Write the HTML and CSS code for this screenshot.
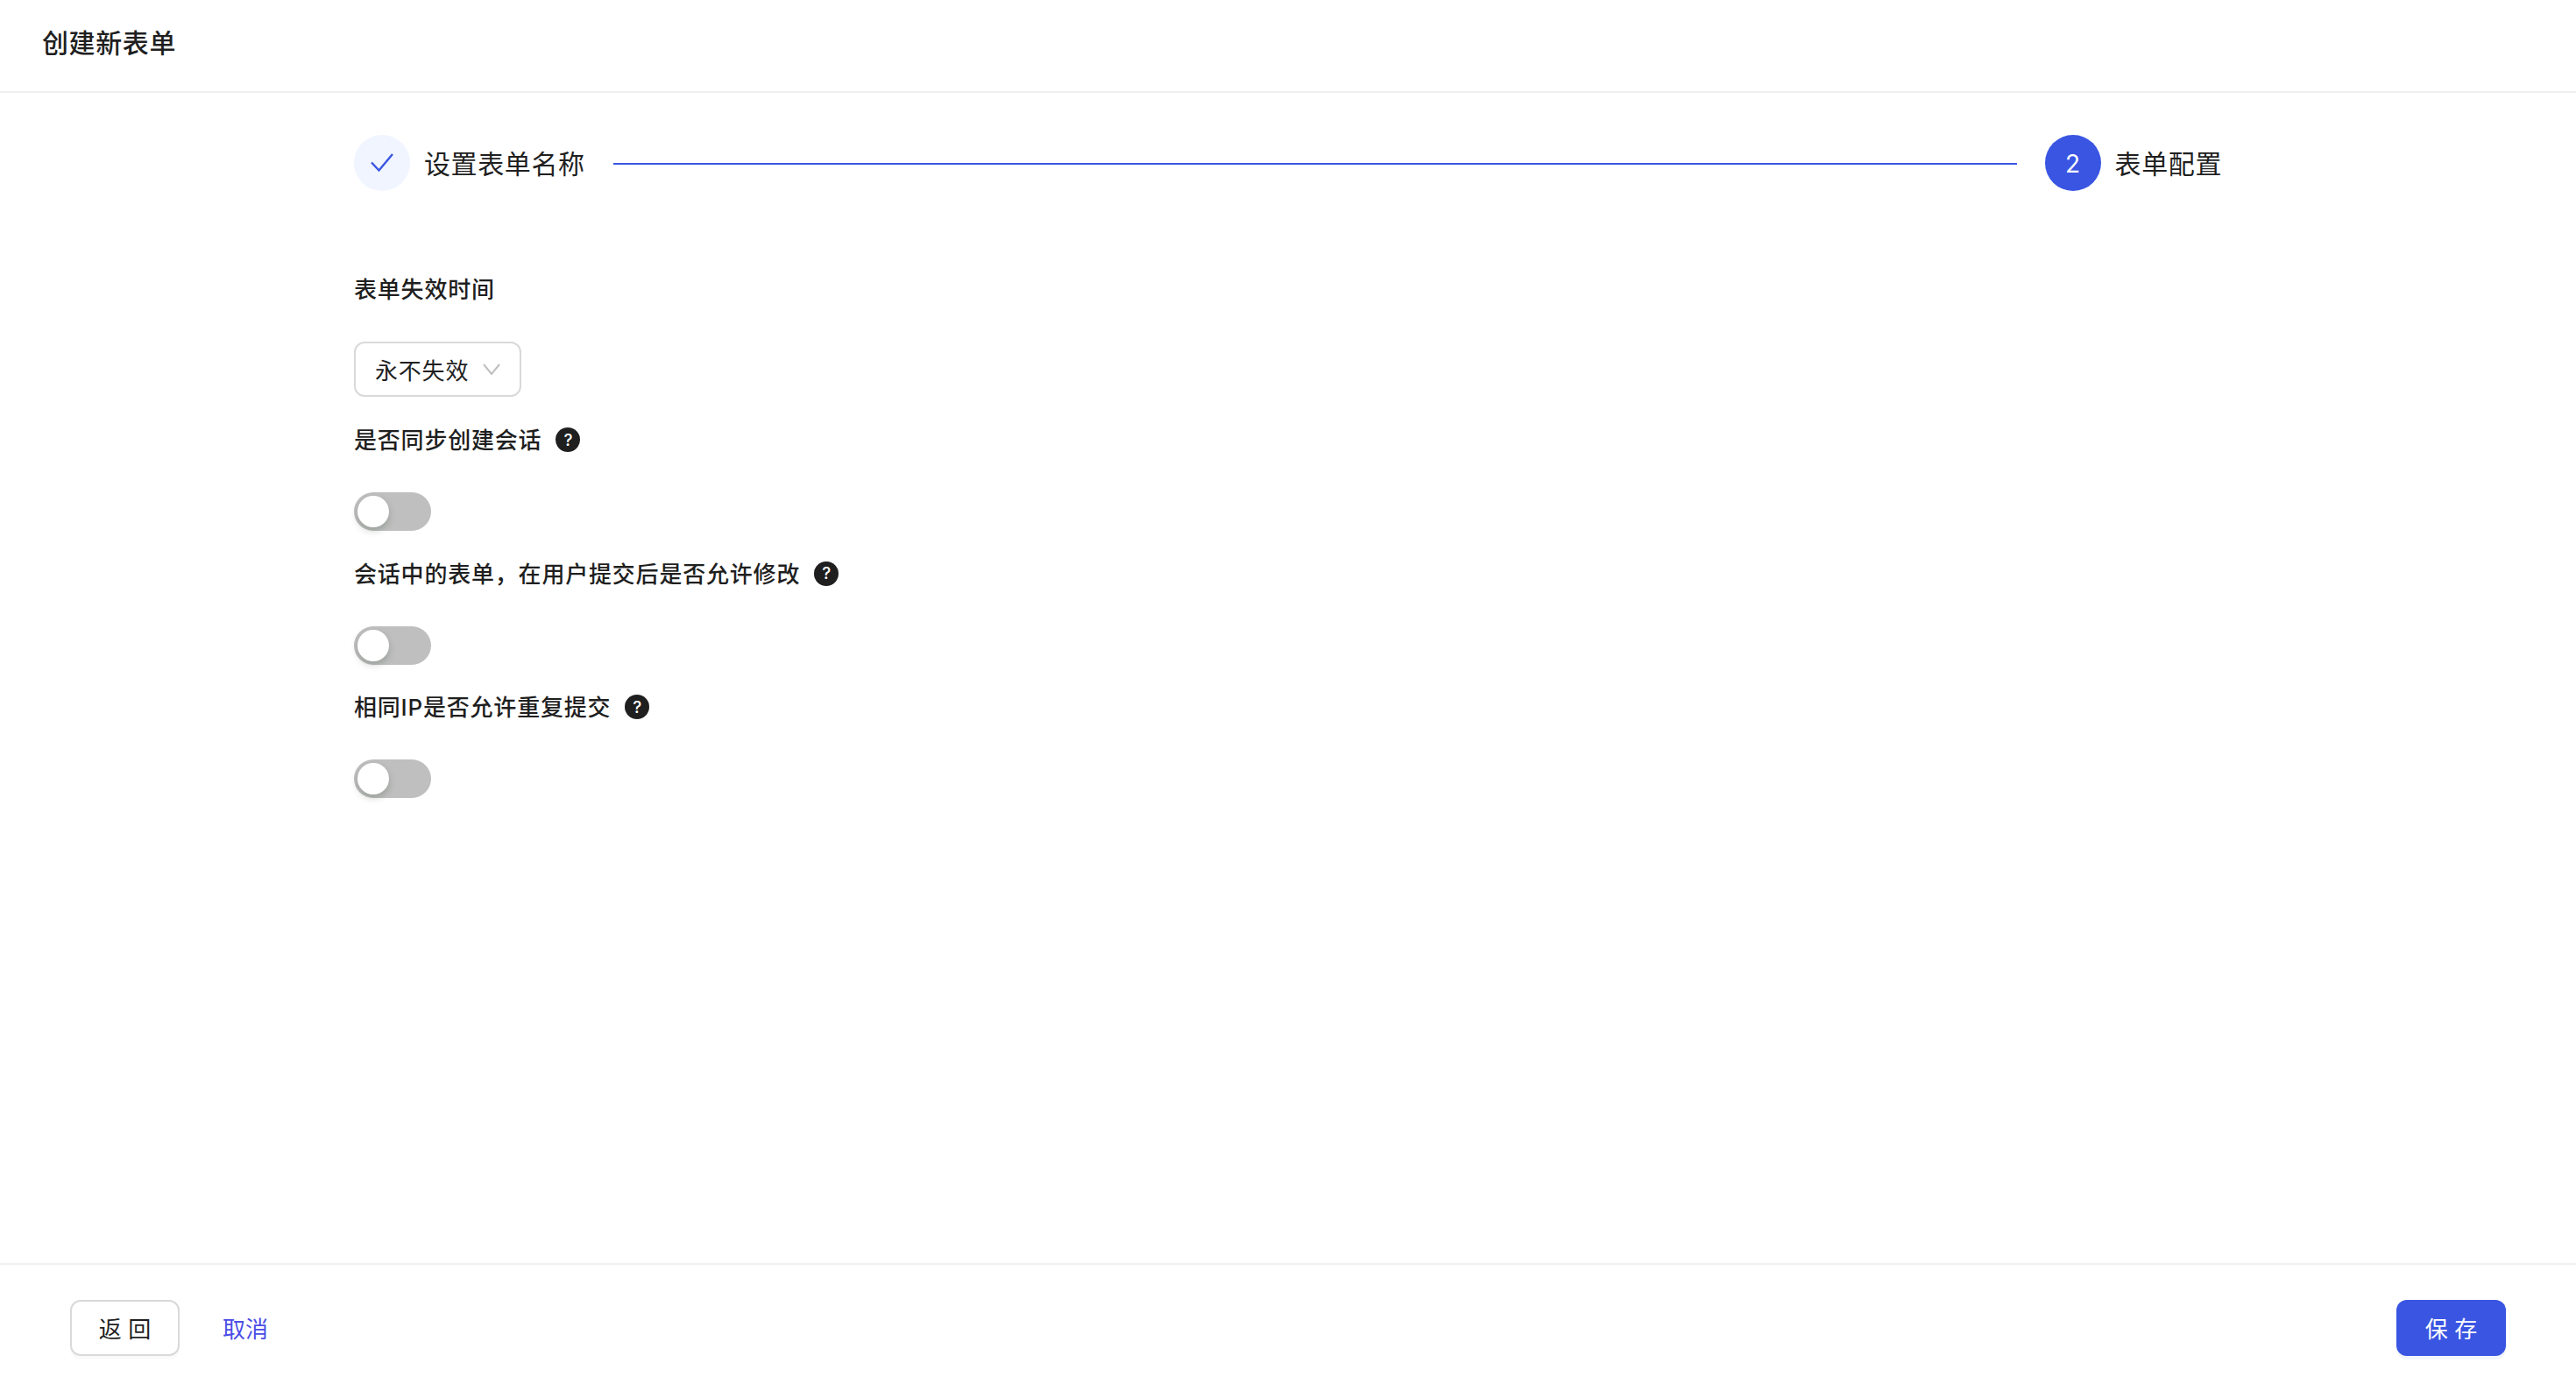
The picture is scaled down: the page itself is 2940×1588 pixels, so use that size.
FILE: index.html
```html
<!DOCTYPE html>
<html lang="zh-CN">
<head>
  <meta charset="UTF-8" />
  <title>创建新表单</title>
  <link rel="stylesheet" href="styles.css">
</head>
<body>
  <div class="page">
    <header class="page-header">创建新表单</header>

    <main class="content">
      <div class="steps">
        <div class="step">
          <span class="step-icon step-done">
            <svg width="28" height="24" viewBox="0 0 28 24"><path d="M2 11.5 L10.5 20.5 L26 2" fill="none" stroke="#3955e2" stroke-width="2.4"/></svg>
          </span>
          <span class="step-title">设置表单名称</span>
        </div>
        <div class="step-line"></div>
        <div class="step">
          <span class="step-icon step-active">2</span>
          <span class="step-title">表单配置</span>
        </div>
      </div>

      <div class="form-item form-item-select">
        <div class="form-label">表单失效时间</div>
        <div class="select">
          <span>永不失效</span>
          <svg width="20" height="13" viewBox="0 0 20 13"><path d="M1 1 L10 12 L19 1" fill="none" stroke="#bfbfbf" stroke-width="2"/></svg>
        </div>
      </div>

      <div class="form-item">
        <div class="form-label">是否同步创建会话<span class="help">?</span></div>
        <div class="switch"><span class="switch-knob"></span></div>
      </div>

      <div class="form-item">
        <div class="form-label">会话中的表单，在用户提交后是否允许修改<span class="help">?</span></div>
        <div class="switch"><span class="switch-knob"></span></div>
      </div>

      <div class="form-item">
        <div class="form-label">相同IP是否允许重复提交<span class="help">?</span></div>
        <div class="switch"><span class="switch-knob"></span></div>
      </div>
    </main>

    <footer class="page-footer">
      <div class="footer-left">
        <button class="btn btn-default">返 回</button>
        <a class="link-cancel">取消</a>
      </div>
      <button class="btn btn-primary">保 存</button>
    </footer>
  </div>
</body>
</html>
```

FILE: styles.css
```css
* {
  box-sizing: border-box;
}
body {
  margin: 0;
  background-color: #fff;
  color: #1f1f1f;
  font-family: Inter, 'Noto Sans CJK SC', sans-serif;
}
.page {
  display: flex;
  flex-direction: column;
  height: 100vh;
}
.page-header {
  height: 106px;
  padding-left: 48px;
  border-bottom: 2px solid #f0f0f0;
  font-size: 30px;
  font-weight: 500;
  letter-spacing: 0.6px;
  line-height: 98px;
}
.content {
  flex: 1;
  width: 2132px;
  margin: 0 auto;
  padding-top: 48px;
}
.steps {
  display: flex;
  align-items: center;
  margin-bottom: 92px;
}
.step {
  display: flex;
  align-items: center;
  gap: 16px;
}
.step-icon {
  display: flex;
  align-items: center;
  justify-content: center;
  width: 64px;
  height: 64px;
  border-radius: 50%;
  font-size: 28px;
}
.step-done {
  background-color: #f0f5ff;
}
.step-active {
  padding-top: 2px;
  background-color: #3955e2;
  color: #fff;
}
.step-title {
  padding-top: 2px;
  font-size: 30px;
  letter-spacing: 0.6px;
  line-height: 62px;
}
.step-line {
  flex: 1;
  height: 2px;
  margin: 2px 32px 0;
  background-color: #3955e2;
}
.form-item {
  margin-bottom: 28.5px;
}
.form-item-select {
  margin-bottom: 29px;
}
.form-label {
  display: flex;
  align-items: center;
  height: 40px;
  margin-bottom: 40px;
  padding-bottom: 3px;
  font-size: 26px;
  font-weight: 500;
  letter-spacing: 0.8px;
}
.help {
  display: flex;
  align-items: center;
  justify-content: center;
  width: 28px;
  height: 28px;
  margin-top: 3px;
  margin-left: 16px;
  border-radius: 50%;
  background-color: #1f1f1f;
  color: #fff;
  font-size: 19px;
  font-weight: 500;
  letter-spacing: 0;
}
.select {
  display: inline-flex;
  align-items: center;
  gap: 16px;
  height: 63px;
  padding: 0 22px 0 22px;
  border: 2px solid #d9d9d9;
  border-radius: 12px;
  font-size: 26px;
  letter-spacing: 0.8px;
  vertical-align: top;
}
.switch {
  position: relative;
  width: 88px;
  height: 44px;
  border-radius: 22px;
  background-color: #bfbfbf;
}
.switch-knob {
  position: absolute;
  top: 4px;
  left: 4px;
  width: 36px;
  height: 36px;
  border-radius: 50%;
  background-color: #fff;
  box-shadow: 0 4px 8px rgba(0, 35, 11, 0.2);
}
.page-footer {
  display: flex;
  align-items: center;
  justify-content: space-between;
  height: 146px;
  padding: 0 80px;
  border-top: 2px solid #f0f0f0;
}
.footer-left {
  display: flex;
  align-items: center;
  gap: 49px;
}
.btn {
  height: 64px;
  padding: 0 0 2px;
  border-radius: 12px;
  font-family: inherit;
  font-size: 26px;
  white-space: nowrap;
}
.btn-default {
  width: 125px;
  border: 2px solid #d9d9d9;
  background-color: #fff;
  color: #1f1f1f;
  box-shadow: 0 4px 0 rgba(0, 0, 0, 0.02);
}
.btn-primary {
  width: 125px;
  border: none;
  background-color: #3955e2;
  color: #fff;
  box-shadow: 0 4px 0 rgba(57, 85, 226, 0.06);
}
.link-cancel {
  padding-bottom: 2px;
  color: #4a4de6;
  font-size: 26px;
}
```
